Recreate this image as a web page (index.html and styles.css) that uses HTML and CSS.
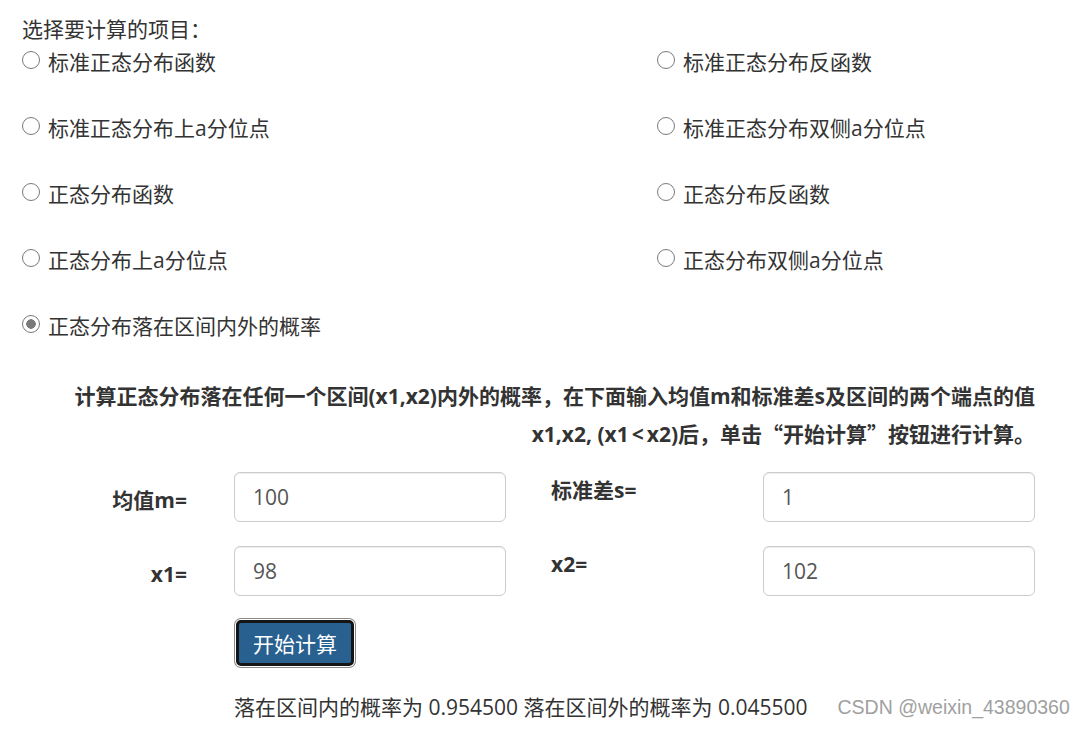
FILE: index.html
```html
<!DOCTYPE html>
<html lang="zh-CN">
<head>
<meta charset="utf-8">
<title>正态分布计算</title>
<link rel="stylesheet" href="styles.css">
</head>
<body>
<div class="page">
  <div class="prompt">选择要计算的项目：</div>
  <div class="options">
    <label class="opt"><input type="radio" name="item" class="radio"><span>标准正态分布函数</span></label>
    <label class="opt"><input type="radio" name="item" class="radio"><span>标准正态分布反函数</span></label>
    <label class="opt"><input type="radio" name="item" class="radio"><span>标准正态分布上a分位点</span></label>
    <label class="opt"><input type="radio" name="item" class="radio"><span>标准正态分布双侧a分位点</span></label>
    <label class="opt"><input type="radio" name="item" class="radio"><span>正态分布函数</span></label>
    <label class="opt"><input type="radio" name="item" class="radio"><span>正态分布反函数</span></label>
    <label class="opt"><input type="radio" name="item" class="radio"><span>正态分布上a分位点</span></label>
    <label class="opt"><input type="radio" name="item" class="radio"><span>正态分布双侧a分位点</span></label>
    <label class="opt"><input type="radio" name="item" class="radio" checked><span>正态分布落在区间内外的概率</span></label>
  </div>
  <div class="desc">
    <div class="desc-line">计算正态分布落在任何一个区间(x1,x2)内外的概率，在下面输入均值m和标准差s及区间的两个端点的值</div>
    <div class="desc-line">x1,x2, (x1<span class="lt">&lt;</span>x2)后，单击<span class="cjk">“开始计算”</span>按钮进行计算。</div>
  </div>
  <div class="calc">
    <label class="lbl lbl-right">均值m=</label>
    <div class="field"><input class="input" type="text" value="100"></div>
    <label class="lbl lbl-top">标准差s=</label>
    <div class="field"><input class="input" type="text" value="1"></div>
    <label class="lbl lbl-right">x1=</label>
    <div class="field"><input class="input" type="text" value="98"></div>
    <label class="lbl lbl-top">x2=</label>
    <div class="field"><input class="input" type="text" value="102"></div>
  </div>
  <div class="actions">
    <button class="btn" type="button">开始计算</button>
  </div>
  <div class="result">
    <span class="result-text">落在区间内的概率为 0.954500 落在区间外的概率为 0.045500</span>
    <span class="watermark">CSDN @weixin_43890360</span>
  </div>
</div>
</body>
</html>
```
FILE: styles.css
```css
html, body {
  margin: 0;
  padding: 0;
  background: #fff;
}
body {
  font-family: "Open Sans", "Noto Sans CJK SC", sans-serif;
  font-size: 21px;
  line-height: 30px;
  color: #333;
}
.page {
  padding: 14px 0 0 22px;
  width: 1013px;
}
.prompt {
  height: 30px;
}
.options {
  margin-top: 3px;
  display: grid;
  grid-template-columns: 635px 1fr;
  row-gap: 36px;
}
.opt {
  display: flex;
  align-items: center;
  height: 30px;
  white-space: nowrap;
}
.radio {
  appearance: none;
  -webkit-appearance: none;
  margin: 0 8px 0 0;
  width: 18px;
  height: 18px;
  border: 1.5px solid #7a7a7a;
  border-radius: 50%;
  box-sizing: border-box;
  background: #fff;
  position: relative;
  top: -2px;
  flex: none;
}
.radio:checked {
  background: radial-gradient(circle, #7a7a7a 0 4.5px, #fff 5px);
}
.desc {
  margin-top: 36px;
  font-weight: bold;
  text-align: right;
  white-space: nowrap;
}
.desc-line {
  height: 38px;
  line-height: 38px;
  overflow: visible;
}
.cjk {
  font-family: "Noto Sans CJK SC", sans-serif;
  line-height: 1;
}
.lt {
  padding: 0 3px;
}
.calc {
  margin-top: 19px;
  display: grid;
  grid-template-columns: 212px 317px 212px 272px;
  grid-auto-rows: 50px;
  row-gap: 24px;
}
.lbl {
  font-weight: bold;
  white-space: nowrap;
}
.lbl-right {
  text-align: right;
  padding: 13px 47px 0 0;
}
.lbl-top {
  padding-top: 3px;
}
.input {
  box-sizing: border-box;
  width: 272px;
  height: 50px;
  margin: 0;
  padding: 0 18px;
  border: 1px solid #ccc;
  border-radius: 6px;
  font-family: "Open Sans", "Noto Sans CJK SC", sans-serif;
  font-size: 21px;
  color: #555;
  background: #fff;
  box-shadow: inset 0 1px 1px rgba(0,0,0,0.075);
  outline: none;
}
.actions {
  margin-top: 24px;
  padding-left: 214px;
}
.btn {
  box-sizing: border-box;
  width: 118px;
  height: 46px;
  margin: 0;
  padding: 0;
  font-family: "Open Sans", "Noto Sans CJK SC", sans-serif;
  font-size: 21px;
  color: #fff;
  background: #286090;
  border: 3px solid #151515;
  border-radius: 5px;
  box-shadow: 0 0 0 1px #fff, 0 0 0 2px #8a8a8a;
}
.result {
  margin-top: 26px;
  padding-left: 212px;
  display: flex;
  align-items: center;
  gap: 30px;
  white-space: nowrap;
}
.watermark {
  font-family: "Liberation Sans", Arial, sans-serif;
  font-size: 19.5px;
  color: #a0a0a0;
}
```
